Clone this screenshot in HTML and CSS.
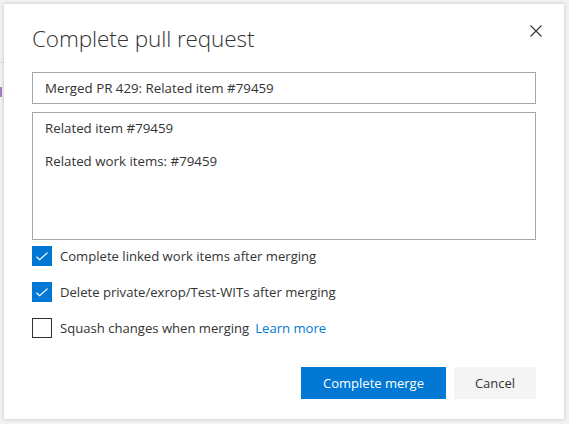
FILE: index.html
```html
<!DOCTYPE html>
<html>
<head>
<meta charset="utf-8">
<link rel="stylesheet" href="styles.css">
</head>
<body>
<div class="backdrop-line"></div>
<div class="backdrop-tick"></div>
<div class="dialog">
  <div class="header">
    <h1 class="title">Complete pull request</h1>
    <button class="close" aria-label="Close">
      <svg width="12" height="12" viewBox="0 0 12 12"><path d="M0.5 0.5 L11.5 11.5 M11.5 0.5 L0.5 11.5" stroke="#333" stroke-width="1.1" fill="none"/></svg>
    </button>
  </div>
  <div class="input">Merged PR 429: Related item #79459</div>
  <div class="textarea">
    <div class="tline">Related item #79459</div>
    <div class="tline gap">Related work items: #79459</div>
  </div>
  <div class="checks">
    <label class="check">
      <span class="box on"><svg width="20" height="20" viewBox="0 0 20 20"><path d="M4.5 10.8 L7.6 13.8 L15.6 6.6" stroke="#fff" stroke-width="1.2" fill="none"/></svg></span>
      <span class="label">Complete linked work items after merging</span>
    </label>
    <label class="check">
      <span class="box on"><svg width="20" height="20" viewBox="0 0 20 20"><path d="M4.5 10.8 L7.6 13.8 L15.6 6.6" stroke="#fff" stroke-width="1.2" fill="none"/></svg></span>
      <span class="label">Delete private/exrop/Test-WITs after merging</span>
    </label>
    <label class="check">
      <span class="box"></span>
      <span class="label">Squash changes when merging</span>
      <a class="link">Learn more</a>
    </label>
  </div>
  <div class="footer">
    <button class="btn primary">Complete merge</button>
    <button class="btn secondary">Cancel</button>
  </div>
</div>
</body>
</html>
```

FILE: styles.css
```css
html, body {
  margin: 0;
  padding: 0;
  background: #f3f3f3;
  width: 569px;
  height: 424px;
  overflow: hidden;
  font-family: "Open Sans", "Noto Sans", sans-serif;
  color: #333;
}
body {
  padding: 4px 5px 5px 4px;
  box-sizing: border-box;
  position: relative;
}
.backdrop-line {
  position: absolute;
  left: 0;
  top: 62px;
  width: 4px;
  height: 1px;
  background: #e0e0e0;
}
.backdrop-tick {
  position: absolute;
  left: 0;
  top: 87px;
  width: 2px;
  height: 10px;
  background: #a77dc2;
}
.dialog {
  position: relative;
  width: 560px;
  height: 415px;
  box-sizing: border-box;
  background: #fff;
  padding: 0 28px 20px 28px;
  box-shadow: 0 0 4px rgba(0,0,0,0.22);
  display: flex;
  flex-direction: column;
}
.header {
  height: 68px;
  display: flex;
  justify-content: space-between;
  align-items: flex-start;
}
.title {
  margin: 20px 0 0 0;
  font-size: 22.5px;
  font-weight: 300;
  line-height: 30px;
  color: #333;
  letter-spacing: -0.1px;
}
.close {
  margin: 21px -6px 0 0;
  padding: 0;
  border: 0;
  background: none;
  width: 12px;
  height: 12px;
  display: flex;
}
.input {
  height: 32px;
  box-sizing: border-box;
  border: 1px solid #a6a6a6;
  padding: 0 12px;
  font-size: 13.3px;
  line-height: 30px;
  color: #333;
}
.textarea {
  margin-top: 8px;
  height: 128px;
  box-sizing: border-box;
  border: 1px solid #a6a6a6;
  padding: 5px 12px;
  font-size: 13.3px;
  line-height: 20px;
}
.tline.gap {
  margin-top: 13px;
}
.checks {
  margin-top: 6px;
  display: flex;
  flex-direction: column;
  gap: 16px;
}
.check {
  display: flex;
  align-items: center;
  height: 20px;
  font-size: 13.1px;
}
.box {
  width: 20px;
  height: 20px;
  box-sizing: border-box;
  border: 1px solid #333;
  background: #fff;
  display: flex;
  flex-shrink: 0;
}
.box.on {
  border-color: #0078d4;
  background: #0078d4;
}
.box.on svg {
  margin: -1px;
}
.label {
  margin-left: 8px;
}
.link {
  margin-left: 6px;
  color: #0078d4;
}
.footer {
  margin-top: auto;
  display: flex;
  justify-content: flex-end;
  gap: 8px;
}
.btn {
  height: 32px;
  border: 0;
  font-family: inherit;
  font-size: 13px;
  padding: 0;
}
.primary {
  width: 145px;
  background: #0078d4;
  color: #fff;
}
.secondary {
  width: 82px;
  background: #f4f4f4;
  color: #333;
}
```
